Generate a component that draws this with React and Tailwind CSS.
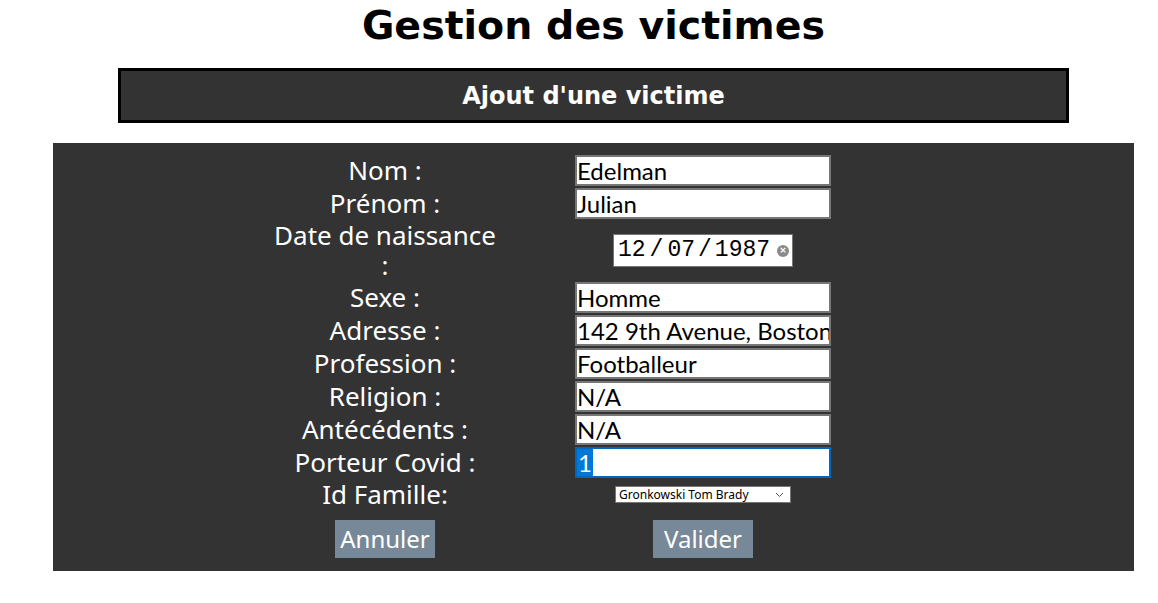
import { useState } from 'react';

const fields = [
    { label: 'Nom :', value: 'Edelman' },
    { label: 'Prénom :', value: 'Julian' },
    { label: 'Date de naissance :', type: 'date', value: ['12', '07', '1987'] },
    { label: 'Sexe :', value: 'Homme' },
    { label: 'Adresse :', value: '142 9th Avenue, Boston' },
    { label: 'Profession :', value: 'Footballeur' },
    { label: 'Religion :', value: 'N/A' },
    { label: 'Antécédents :', value: 'N/A' },
    { label: 'Porteur Covid :', type: 'focus', value: '1' },
    { label: 'Id Famille:', type: 'select', value: 'Gronkowski Tom Brady' },
];

function Field({ field }) {
    if (field.type === 'date') {
        const [d, m, y] = field.value;
        return (
            <div className="flex items-center justify-center">
                <div className="flex items-center gap-[4px] h-[33px] w-[180px] bg-white border border-[#767676] pl-[4px] whitespace-nowrap font-['Liberation_Mono',monospace] text-[23px] leading-none text-black">
                    <span>{d}</span>
                    <span>/</span>
                    <span>{m}</span>
                    <span className="-ml-[1px]">/</span>
                    <span className="-ml-[1px]">{y}</span>
                    <span className="ml-[3px] flex items-center justify-center w-[12px] h-[12px] rounded-full bg-[#8a8a8a] text-white text-[9px] leading-none font-['DejaVu_Sans',sans-serif] font-bold">×</span>
                </div>
            </div>
        );
    }
    if (field.type === 'select') {
        return (
            <div className="flex items-center justify-center">
                <div className="flex items-center justify-between h-[17px] w-[176px] bg-white border border-[#767676] pl-[3px] pr-[6px] whitespace-nowrap font-['Noto_Sans',sans-serif] text-[12px] text-black">
                    <span>{field.value}</span>
                    <svg width="9" height="6" viewBox="0 0 9 6" fill="none" stroke="#555" strokeWidth="1">
                        <path d="M1 1l3.5 3.5L8 1" />
                    </svg>
                </div>
            </div>
        );
    }
    if (field.type === 'focus') {
        return (
            <div className="flex items-center h-[31px] w-[256px] bg-white border-2 border-[#0067c0] overflow-hidden whitespace-nowrap font-['Lato',sans-serif] text-[24px] text-black">
                <span className="bg-[#0078d7] text-white leading-[27px] px-[1px]">{field.value}</span>
            </div>
        );
    }
    return (
        <div className="flex items-center h-[31px] w-[256px] bg-white border-2 border-[#767676] overflow-hidden whitespace-nowrap font-['Lato',sans-serif] text-[24px] text-black">
            {field.value}
        </div>
    );
}

export default function App() {
    const [fam] = useState(fields);

    return (
        <div className="min-h-[603px] bg-white font-['Noto_Sans',sans-serif]">
            <div className="ml-[53px] w-[1081px] pt-[3px]">
                <h1 className="text-center text-[39.5px] leading-[44px] font-bold text-black font-['DejaVu_Sans',sans-serif]">
                    Gestion des victimes
                </h1>
                <div className="mx-auto mt-[21px] w-[951px] h-[55px] border-[3px] border-black bg-[#333333] flex items-center justify-center">
                    <h2 className="text-[24px] font-bold text-white font-['DejaVu_Sans',sans-serif]">Ajout d'une victime</h2>
                </div>

                {/* Formulaire */}
                <div className="mt-[20px] bg-[#333333] pt-[12px] pb-[13px] pl-[217px]">
                    <div className="grid grid-cols-[230px_256px] gap-x-[75px] gap-y-[2px] items-center">
                        {fam.map((f) => (
                            <div key={f.label} className="contents">
                                <div className="text-center text-white text-[26px] leading-[29.5px]">{f.label}</div>
                                <Field field={f} />
                            </div>
                        ))}
                    </div>
                    <div className="grid grid-cols-[230px_256px] gap-x-[75px] mt-[10px]">
                        <div className="flex justify-center">
                            <button className="w-[100px] h-[38px] bg-[#778899] text-white text-[24px]">Annuler</button>
                        </div>
                        <div className="flex justify-center">
                            <button className="w-[100px] h-[38px] bg-[#778899] text-white text-[24px]">Valider</button>
                        </div>
                    </div>
                </div>
            </div>
        </div>
    );
}
